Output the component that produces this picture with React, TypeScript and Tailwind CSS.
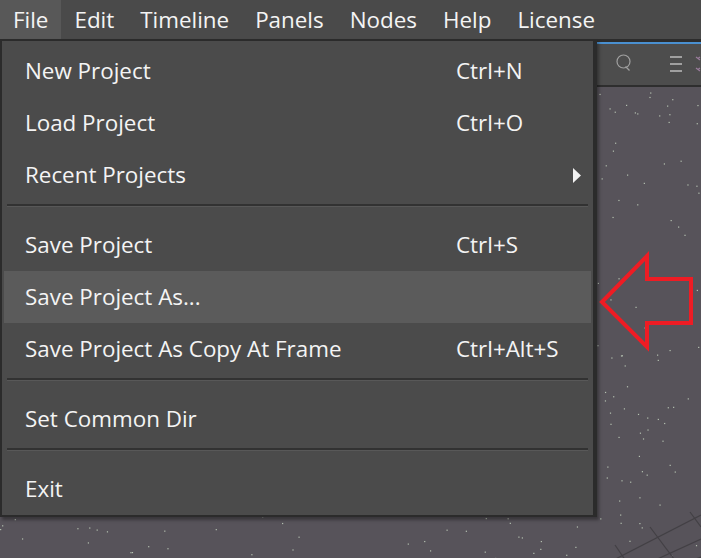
import React from 'react';

type Item = { label: string; shortcut?: string; submenu?: boolean; active?: boolean } | 'sep';

const menuBar = ['File', 'Edit', 'Timeline', 'Panels', 'Nodes', 'Help', 'License'];

const fileMenu: Item[] = [
  { label: 'New Project', shortcut: 'Ctrl+N' },
  { label: 'Load Project', shortcut: 'Ctrl+O' },
  { label: 'Recent Projects', submenu: true },
  'sep',
  { label: 'Save Project', shortcut: 'Ctrl+S' },
  { label: 'Save Project As...', active: true },
  { label: 'Save Project As Copy At Frame', shortcut: 'Ctrl+Alt+S' },
  'sep',
  { label: 'Set Common Dir' },
  'sep',
  { label: 'Exit' },
];

// scattered dots for the viewport, fixed seed so the picture is stable
const dots: [number, number][] = (() => {
  let s = 7;
  const rnd = () => {
    s = (s * 16807) % 2147483647;
    return s / 2147483647;
  };
  const out: [number, number][] = [];
  for (let i = 0; i < 520; i++) out.push([rnd() * 701, rnd() * 480]);
  return out;
})();

const Viewport: React.FC = () => (
  <div className="relative flex-1 bg-[#57535a] overflow-hidden">
    <svg className="absolute inset-0" width="701" height="480">
      {dots.map(([x, y], i) => (
        <rect key={i} x={x} y={y} width="1.2" height="1.2" fill="#b6c2b2" />
      ))}
      <g stroke="#434045" strokeWidth="1.2" fill="none">
        <path d="M600 480 L701 428" />
        <path d="M640 480 L701 452" />
        <path d="M675 480 L701 470" />
        <path d="M690 425 L701 440" />
        <path d="M650 440 L680 480" />
        <path d="M615 458 L630 480" />
      </g>
    </svg>
  </div>
);

const Toolbar: React.FC = () => (
  <div className="flex flex-col">
    <div className="h-[3px] bg-[#2c2c2c]" />
    <div className="h-[2px] bg-[#4a90d0]" />
    <div className="h-[41px] bg-[#4d4d4d] flex items-center justify-end">
      <svg width="16" height="18" viewBox="0 0 16 18" className="mt-[-4px]">
        <circle cx="7.5" cy="7.5" r="6.5" stroke="#a0a0a0" strokeWidth="1.2" fill="none" />
        <path d="M9.5 12.5 L13.5 16.5" stroke="#a0a0a0" strokeWidth="1.2" />
      </svg>
      <div className="flex flex-col gap-[5px] w-[12px] ml-[38px] mt-[-2px]">
        <div className="h-[2px] bg-[#a0a0a0]" />
        <div className="h-[2px] bg-[#a0a0a0]" />
        <div className="h-[2px] bg-[#a0a0a0]" />
      </div>
      <svg width="6" height="16" viewBox="0 0 6 16" className="ml-[13px] mt-[-2px]">
        <path d="M1 1 L5 4 M5 1 L3 2.5 M1 12 L5 15 M5 12 L3 13.5" stroke="#9a7c9c" strokeWidth="1.2" />
      </svg>
    </div>
    <div className="h-[2px] bg-[#2e2e2e]" />
  </div>
);

const Arrow: React.FC = () => (
  <svg className="absolute left-0 top-0 pointer-events-none" width="701" height="558">
    <polygon
      points="602,302 647,256 647,279 691,279 691,323 647,323 647,347"
      fill="none"
      stroke="#ee1c24"
      strokeWidth="4"
      strokeLinejoin="miter"
    />
  </svg>
);

const FileMenu: React.FC = () => (
  <div className="absolute left-0 top-[39px] w-[597px] bg-[#4b4b4b] border-2 border-r-4 border-[#2b2b2b] pt-[4px] shadow-[2px_3px_3px_rgba(0,0,0,0.35)]">
    {fileMenu.map((item, i) =>
      item === 'sep' ? (
        <div key={i} className="h-[18px] pt-[3px] px-[5px]">
          <div className="h-[2px] bg-[#323232]" />
          <div className="h-[1px] bg-[#585858]" />
        </div>
      ) : (
        <div
          key={i}
          className={`h-[52px] mx-[2px] flex items-center pl-[21px] ${item.active ? 'bg-[#5b5b5b]' : ''}`}
        >
          <span className="w-[431px] shrink-0">{item.label}</span>
          {item.shortcut && <span>{item.shortcut}</span>}
          {item.submenu && (
            <svg width="8" height="15" viewBox="0 0 8 15" className="ml-[117px]">
              <polygon points="0,0 8,7.5 0,15" fill="#f2f2f2" />
            </svg>
          )}
        </div>
      )
    )}
  </div>
);

const App: React.FC = () => {
  return (
    <div
      className="relative w-[701px] h-[558px] overflow-hidden bg-[#3a3a3a] text-[#f4f4f4] text-[22.4px]"
      style={{ fontFamily: '"Open Sans", "Noto Sans", sans-serif' }}
    >
      <div className="flex flex-col h-full">
        <div className="h-[39px] bg-[#4a4a4a] flex items-stretch">
          {menuBar.map((m, i) => (
            <div
              key={m}
              className={`flex items-center px-[13px] ${i === 0 ? 'bg-[#585858]' : ''}`}
            >
              {m}
            </div>
          ))}
        </div>
        <Toolbar />
        <Viewport />
      </div>
      <FileMenu />
      <Arrow />
    </div>
  );
};

export default App;
